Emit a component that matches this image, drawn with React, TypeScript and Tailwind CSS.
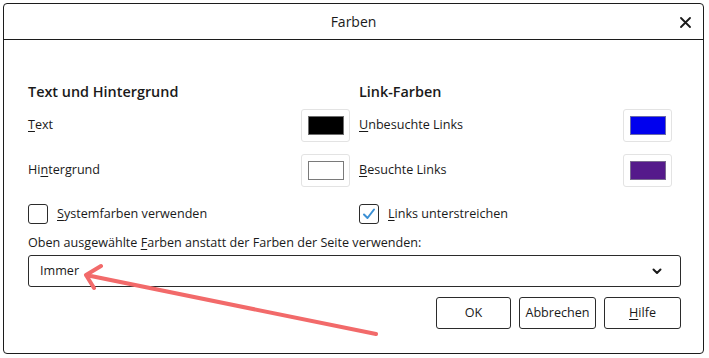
import React from "react";

const font = { fontFamily: '"Open Sans", "Noto Sans", sans-serif' };

function Swatch({ color, border }: { color: string; border: string }) {
  return (
    <div className="flex h-[33px] w-[49px] items-center justify-center rounded-[3px] border border-[#e3e3e3] bg-white">
      <div className={`h-[19px] w-[36px] border ${border}`} style={{ backgroundColor: color }} />
    </div>
  );
}

function Checkbox({ checked }: { checked?: boolean }) {
  return (
    <div className="flex h-[20px] w-[20px] items-center justify-center rounded-[3px] border border-[#2b2b2b] bg-white">
      {checked && (
        <svg width="14" height="14" viewBox="0 0 14 14">
          <path d="M2 7.5 L5.5 11 L12 2.5" fill="none" stroke="#3a8fd4" strokeWidth="2" strokeLinecap="round" strokeLinejoin="round" />
        </svg>
      )}
    </div>
  );
}

export default function App() {
  return (
    <div className="relative h-[358px] w-[709px] bg-white text-[#1a1a1a]" style={font}>
      <div className="ml-[3px] pt-[3px]">
        <div className="flex h-[351px] w-[701px] flex-col rounded-[4px] border border-[#1c1c1c] bg-white">
          {/* Header */}
          <div className="relative flex h-[36px] shrink-0 items-center justify-center border-b border-[#1c1c1c]">
            <span className="text-[14px] leading-[18px]">Farben</span>
            <div className="absolute right-[12px] top-[13px]">
              <svg width="11" height="11" viewBox="0 0 11 11">
                <path d="M1 1 L10 10 M10 1 L1 10" stroke="#1a1a1a" strokeWidth="1.8" strokeLinecap="round" />
              </svg>
            </div>
          </div>
          {/* Body */}
          <div className="flex flex-col pl-[24px] pt-[42px]">
            <div className="flex">
              {/* Left column */}
              <div className="flex w-[331px] flex-col">
                <div className="h-[20px] text-[14.4px] font-semibold leading-[20px]">Text und Hintergrund</div>
                <div className="mt-[7px] flex h-[33px] w-[322px] items-center justify-between">
                  <span className="text-[12.6px]"><u className="underline-offset-2">T</u>ext</span>
                  <Swatch color="#000000" border="border-[#6e6e6e]" />
                </div>
                <div className="mt-[12px] flex h-[33px] w-[322px] items-center justify-between">
                  <span className="text-[12.6px]">Hi<u className="underline-offset-2">n</u>tergrund</span>
                  <Swatch color="#ffffff" border="border-[#7a7a7a]" />
                </div>
                <div className="mt-[17px] flex h-[20px] items-center gap-[9px]">
                  <Checkbox />
                  <span className="text-[12.6px] leading-[18px]"><u className="underline-offset-2">S</u>ystemfarben verwenden</span>
                </div>
              </div>
              {/* Right column */}
              <div className="flex w-[313px] flex-col">
                <div className="h-[20px] text-[14.4px] font-semibold leading-[20px]">Link-Farben</div>
                <div className="mt-[7px] flex h-[33px] items-center justify-between">
                  <span className="text-[12.6px]"><u className="underline-offset-2">U</u>nbesuchte Links</span>
                  <Swatch color="#0000ee" border="border-[#6a6aa8]" />
                </div>
                <div className="mt-[12px] flex h-[33px] items-center justify-between">
                  <span className="text-[12.6px]"><u className="underline-offset-2">B</u>esuchte Links</span>
                  <Swatch color="#551a8b" border="border-[#7a6a90]" />
                </div>
                <div className="mt-[17px] flex h-[20px] items-center gap-[9px]">
                  <Checkbox checked />
                  <span className="text-[12.6px] leading-[18px]"><u className="underline-offset-2">L</u>inks unterstreichen</span>
                </div>
              </div>
            </div>
            <div className="mt-[10px] h-[18px] text-[12.6px] leading-[18px]">
              Oben ausgewählte <u className="underline-offset-2">F</u>arben anstatt der Farben der Seite verwenden:
            </div>
            <div className="mt-[3px] flex h-[32px] w-[653px] items-center justify-between rounded-[3px] border border-[#2b2b2b] pl-[11px] pr-[18px]">
              <span className="text-[12.6px]">Immer</span>
              <svg width="10" height="7" viewBox="0 0 10 7">
                <path d="M1.5 1.5 L5 5 L8.5 1.5" fill="none" stroke="#1a1a1a" strokeWidth="2" strokeLinecap="round" strokeLinejoin="round" />
              </svg>
            </div>
            <div className="mt-[10px] flex w-[653px] justify-end gap-[8px]">
              <button className="flex h-[32px] w-[75px] items-center justify-center rounded-[3px] border border-[#2b2b2b] bg-white text-[12.6px]">OK</button>
              <button className="flex h-[32px] w-[77px] items-center justify-center rounded-[3px] border border-[#2b2b2b] bg-white text-[12.6px]">Abbrechen</button>
              <button className="flex h-[32px] w-[77px] items-center justify-center rounded-[3px] border border-[#2b2b2b] bg-white text-[12.6px]"><u className="underline-offset-2">H</u>ilfe</button>
            </div>
          </div>
        </div>
      </div>
      {/* Annotation arrow */}
      <svg className="pointer-events-none absolute left-0 top-0" width="709" height="358" viewBox="0 0 709 358">
        <path d="M376 334 L86 275 M101 266 L86 275 L94 288" fill="none" stroke="#f26a6a" strokeWidth="4" strokeLinecap="round" strokeLinejoin="round" />
      </svg>
    </div>
  );
}
